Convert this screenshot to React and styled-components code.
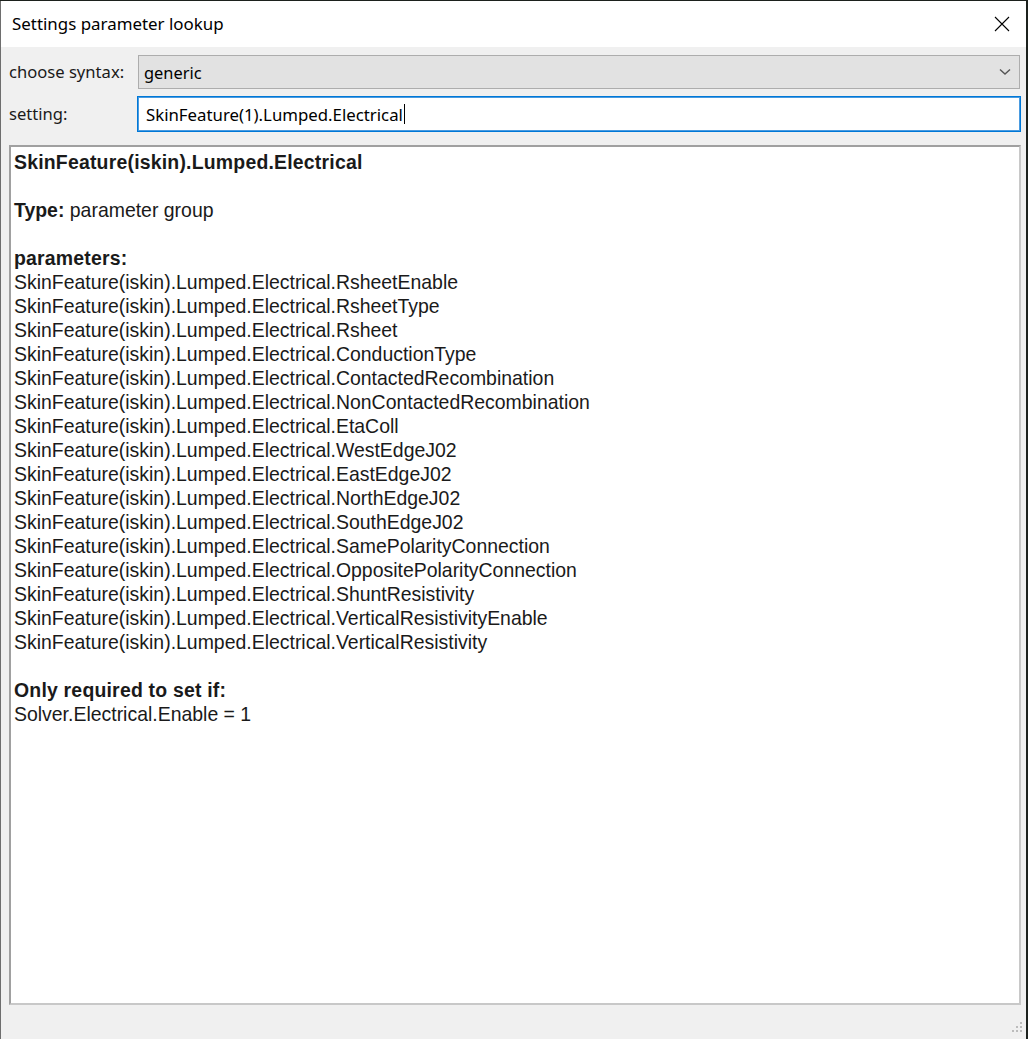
import React from "react";
import styled, { createGlobalStyle } from "styled-components";

const Global = createGlobalStyle`
  html, body { margin: 0; padding: 0; background: #1f2420; }
  #root { width: 1028px; height: 1039px; }
`;

const Backdrop = styled.div`
  width: 1028px;
  height: 1039px;
  padding-top: 1px;
  box-sizing: border-box;
  background: #1c211d;
`;

const Window = styled.div`
  width: 1026px;
  height: 1038px;
  box-sizing: border-box;
  border-left: 1px solid #6e6e6e;
  background: #f0f0f0;
  display: flex;
  flex-direction: column;
  font-family: "Noto Sans", "Open Sans", sans-serif;
`;

const TitleBar = styled.div`
  height: 46px;
  background: #ffffff;
  display: flex;
  align-items: center;
  justify-content: space-between;
  padding-left: 11px;
`;

const Title = styled.div`
  font-size: 16.9px;
  color: #000;
  margin-top: -2px;
`;

const CloseBtn = styled.div`
  width: 46px;
  height: 46px;
  display: flex;
  align-items: center;
  justify-content: center;
  margin-right: 1px;
`;

const Form = styled.div`
  display: flex;
  flex-direction: column;
  gap: 8px;
  padding: 8px 6px 0 8px;
`;

const Row = styled.div`
  display: grid;
  grid-template-columns: 129px 1fr;
  align-items: center;
`;

const Label = styled.div`
  font-size: 16.6px;
  color: #1a1a1a;
  margin-top: -2px;
`;

const Combo = styled.div`
  height: 34px;
  box-sizing: border-box;
  border: 1px solid #adadad;
  background: #e2e2e2;
  display: flex;
  align-items: center;
  justify-content: space-between;
  padding: 0 8px 0 5px;
  font-size: 16.4px;
  color: #000;
`;

const Input = styled.div`
  height: 34px;
  box-sizing: border-box;
  border: 1.5px solid #4a9be0;
  outline: 0.5px solid #0078d7;
  background: #fff;
  display: flex;
  align-items: center;
  padding-left: 7px;
  font-size: 16.8px;
  color: #000;
`;

const Caret = styled.span`
  display: inline-block;
  width: 1px;
  height: 20px;
  background: #000;
  margin-left: 1px;
`;

const Panel = styled.div`
  margin: 14px 5px 0 8px;
  height: 860px;
  box-sizing: border-box;
  background: #fff;
  border-top: 2px solid #a0a0a0;
  border-left: 2px solid #a0a0a0;
  border-right: 2px solid #c8c8c8;
  border-bottom: 2px solid #c8c8c8;
  padding: 3px 0 0 3px;
  font-family: "Liberation Sans", Arial, sans-serif;
  font-size: 19.45px;
  line-height: 24px;
  color: #1a1a1a;
`;

const Line = styled.div`
  font-weight: ${(p) => (p.$bold ? 700 : 400)};
  letter-spacing: ${(p) => (p.$bold ? "0.2px" : "0")};
  white-space: nowrap;
`;

const Gap = styled.div`
  height: 24px;
`;

const B = styled.b`
  font-weight: 700;
`;

const Grip = styled.div`
  display: flex;
  justify-content: flex-end;
  padding: 16px 3px 0 0;
`;

const params = [
  "RsheetEnable",
  "RsheetType",
  "Rsheet",
  "ConductionType",
  "ContactedRecombination",
  "NonContactedRecombination",
  "EtaColl",
  "WestEdgeJ02",
  "EastEdgeJ02",
  "NorthEdgeJ02",
  "SouthEdgeJ02",
  "SamePolarityConnection",
  "OppositePolarityConnection",
  "ShuntResistivity",
  "VerticalResistivityEnable",
  "VerticalResistivity",
];

export default function App() {
  return (
    <>
      <Global />
      <Backdrop>
        <Window>
          <TitleBar>
            <Title>Settings parameter lookup</Title>
            <CloseBtn>
              <svg width="16" height="16" viewBox="0 0 16 16">
                <path d="M1 1 L15 15 M15 1 L1 15" stroke="#000" strokeWidth="1.1" fill="none" />
              </svg>
            </CloseBtn>
          </TitleBar>
          <Form>
            <Row>
              <Label>choose syntax:</Label>
              <Combo>
                <span>generic</span>
                <svg width="12" height="8" viewBox="0 0 12 8">
                  <path d="M1 1.5 L6 6 L11 1.5" stroke="#555" strokeWidth="1.4" fill="none" />
                </svg>
              </Combo>
            </Row>
            <Row>
              <Label>setting:</Label>
              <Input>
                SkinFeature(1).Lumped.Electrical
                <Caret />
              </Input>
            </Row>
          </Form>
          <Panel>
            <Line $bold>SkinFeature(iskin).Lumped.Electrical</Line>
            <Gap />
            <Line>
              <B>Type:</B> parameter group
            </Line>
            <Gap />
            <Line $bold>parameters:</Line>
            {params.map((p) => (
              <Line key={p}>SkinFeature(iskin).Lumped.Electrical.{p}</Line>
            ))}
            <Gap />
            <Line $bold>Only required to set if:</Line>
            <Line>Solver.Electrical.Enable = 1</Line>
          </Panel>
          <Grip>
            <svg width="12" height="12" viewBox="0 0 12 12">
              {[
                [9, 1],
                [9, 5],
                [5, 5],
                [9, 9],
                [5, 9],
                [1, 9],
              ].map(([x, y]) => (
                <rect key={`${x}-${y}`} x={x} y={y} width="2" height="2" fill="#bcbcbc" />
              ))}
            </svg>
          </Grip>
        </Window>
      </Backdrop>
    </>
  );
}
